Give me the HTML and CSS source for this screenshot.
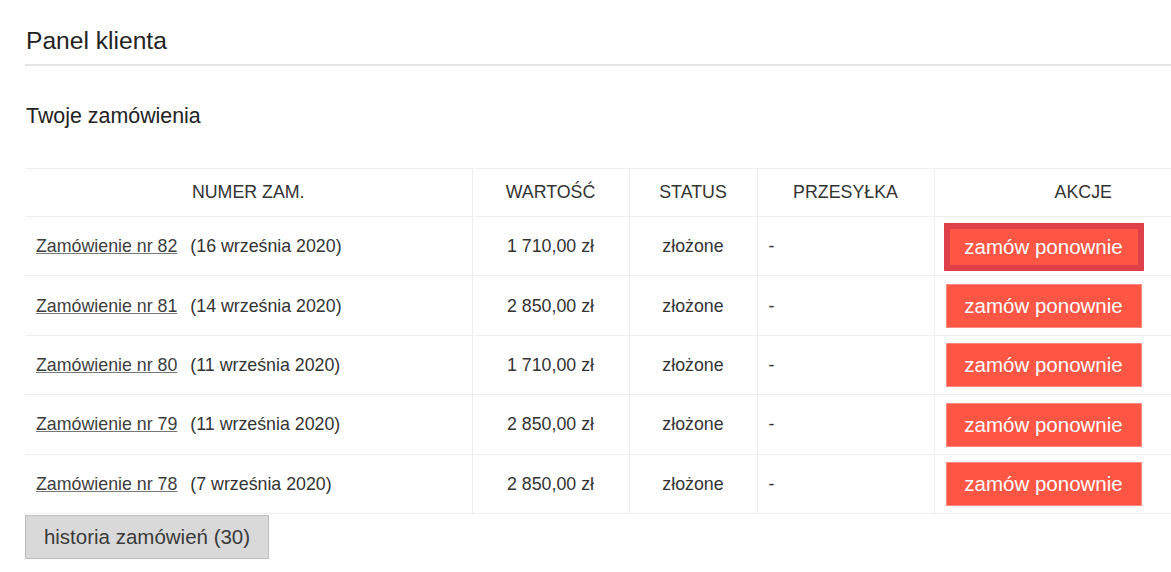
FILE: index.html
```html
<!DOCTYPE html>
<html>
<head>
    <meta charset="utf-8">
    <title>Panel klienta</title>
    <link rel="stylesheet" href="styles.css">
</head>
<body>
    <div class="panel">
        <h1 class="panel-title">Panel klienta</h1>

        <h2 class="section-title">Twoje zamówienia</h2>

        <table class="orders">
            <thead>
                <tr>
                    <th class="col-number">NUMER ZAM.</th>
                    <th class="col-value">WARTOŚĆ</th>
                    <th class="col-status">STATUS</th>
                    <th class="col-shipping">PRZESYŁKA</th>
                    <th class="col-actions">AKCJE</th>
                </tr>
            </thead>
            <tbody>
                <tr>
                    <td class="order-cell"><a href="#" class="order-link">Zamówienie nr 82</a><span class="order-date">(16 września 2020)</span></td>
                    <td class="value-cell">1 710,00 zł</td>
                    <td class="status-cell">złożone</td>
                    <td class="shipping-cell">-</td>
                    <td class="actions-cell"><button class="reorder-button focused">zamów ponownie</button></td>
                </tr>
                <tr>
                    <td class="order-cell"><a href="#" class="order-link">Zamówienie nr 81</a><span class="order-date">(14 września 2020)</span></td>
                    <td class="value-cell">2 850,00 zł</td>
                    <td class="status-cell">złożone</td>
                    <td class="shipping-cell">-</td>
                    <td class="actions-cell"><button class="reorder-button">zamów ponownie</button></td>
                </tr>
                <tr>
                    <td class="order-cell"><a href="#" class="order-link">Zamówienie nr 80</a><span class="order-date">(11 września 2020)</span></td>
                    <td class="value-cell">1 710,00 zł</td>
                    <td class="status-cell">złożone</td>
                    <td class="shipping-cell">-</td>
                    <td class="actions-cell"><button class="reorder-button">zamów ponownie</button></td>
                </tr>
                <tr>
                    <td class="order-cell"><a href="#" class="order-link">Zamówienie nr 79</a><span class="order-date">(11 września 2020)</span></td>
                    <td class="value-cell">2 850,00 zł</td>
                    <td class="status-cell">złożone</td>
                    <td class="shipping-cell">-</td>
                    <td class="actions-cell"><button class="reorder-button">zamów ponownie</button></td>
                </tr>
                <tr>
                    <td class="order-cell"><a href="#" class="order-link">Zamówienie nr 78</a><span class="order-date">(7 września 2020)</span></td>
                    <td class="value-cell">2 850,00 zł</td>
                    <td class="status-cell">złożone</td>
                    <td class="shipping-cell">-</td>
                    <td class="actions-cell"><button class="reorder-button">zamów ponownie</button></td>
                </tr>
            </tbody>
        </table>

        <button class="history-button">historia zamówień (30)</button>
    </div>
</body>
</html>
```

FILE: styles.css
```css
html, body {
    overflow: hidden;
}

body {
    margin: 0;
    padding: 0 0 0 25px;
    font-family: "Liberation Sans", Arial, sans-serif;
    background: #fff;
    color: #333;
}

.panel {
    width: 1207px;
}

.panel-title {
    margin: 0;
    padding: 27px 0 9px 1px;
    font-size: 24.6px;
    line-height: 28px;
    font-weight: normal;
    color: #222;
    border-bottom: 2px solid #e4e4e4;
}

.section-title {
    margin: 37px 0 0;
    padding-left: 1px;
    font-size: 21.4px;
    line-height: 26px;
    font-weight: normal;
    color: #222;
}

.orders {
    margin-top: 39px;
    width: 1207px;
    border-collapse: collapse;
    table-layout: fixed;
    font-size: 17.8px;
}

.orders th,
.orders td {
    box-sizing: border-box;
    border-top: 1px solid #eeeeee;
    border-bottom: 1px solid #eeeeee;
    border-left: 1px solid #eeeeee;
    padding: 0 11px;
}

.orders th:first-child,
.orders td:first-child {
    border-left: none;
}

.orders th {
    height: 48px;
    font-weight: normal;
    text-align: center;
    color: #333;
}

.orders td {
    height: 59.4px;
    padding-top: 1px;
}

.col-number { width: 447px; }
.col-value { width: 157px; }
.col-status { width: 128px; }
.col-shipping { width: 177px; }
.col-actions { width: 298px; }

.order-link {
    color: #3d3d3d;
    text-decoration: underline;
    text-decoration-color: #777;
}

.order-date {
    margin-left: 13px;
}

.value-cell,
.status-cell {
    text-align: center;
}

.shipping-cell {
    padding-left: 12px;
}

.reorder-button {
    display: block;
    width: 196px;
    height: 44px;
    background: #fd5644;
    border: 1px solid #fb8a7d;
    color: #fff;
    font-family: "Liberation Sans", Arial, sans-serif;
    font-size: 20.5px;
    cursor: pointer;
    padding: 0;
}

.reorder-button.focused {
    border-color: #e0404a;
    box-shadow: inset 0 0 0 3px #e0404a;
    outline: 2px solid #e0404a;
}

.history-button {
    display: block;
    margin-top: 1px;
    width: 244px;
    height: 44px;
    background: #d9d9d9;
    border: 1px solid #bdbdbd;
    color: #3a3a3a;
    font-family: "Liberation Sans", Arial, sans-serif;
    font-size: 20.5px;
    padding: 0;
    cursor: pointer;
}
```
